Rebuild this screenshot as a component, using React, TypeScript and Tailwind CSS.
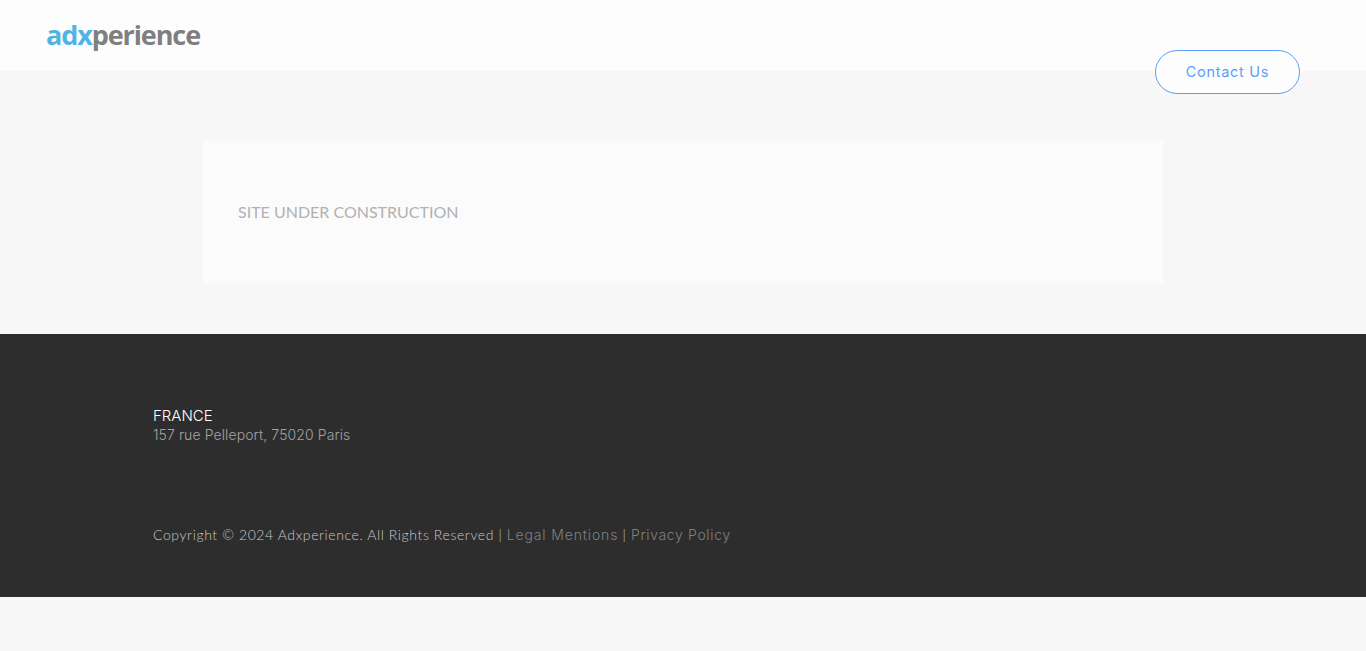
export default function App() {
  return (
    <div className="min-h-[651px] bg-[#f7f7f7] font-['Lato',sans-serif]">
      <header className="h-[71px] bg-[#fdfdfd] flex justify-between pl-[46px] pr-[66px]">
        <div className="pt-[17px] h-[35px] text-[27px] leading-[36px] font-bold tracking-[-1.1px] font-['Open_Sans',sans-serif] flex">
          <span className="text-[#4fb3e3]">adx</span>
          <span className="text-[#7f7f7f]">perience</span>
        </div>
        <a className="mt-[50px] w-[145px] h-[44px] shrink-0 rounded-[22px] border border-[#5b9ff5] bg-[#fdfdfd] text-[#5b9ff5] text-[14.5px] tracking-[0.7px] font-['Inter',sans-serif] flex items-center justify-center">
          Contact Us
        </a>
      </header>
      <main className="h-[263px] pt-[69px]">
        <div className="w-[960px] h-[144px] mx-auto bg-[#fbfbfb] pl-[35px] flex items-center text-[#b0b1b3] text-[16px]">
          SITE UNDER CONSTRUCTION
        </div>
      </main>
      <footer className="h-[263px] bg-[#2d2d2d] pl-[153px] pt-[72px]">
        <div className="text-white text-[15px] leading-[20px] font-['Inter',sans-serif] font-light">FRANCE</div>
        <div className="text-[#a3a3a3] -mt-px text-[14px] leading-[19px] tracking-[0.1px] font-['Inter',sans-serif] font-light">157 rue Pelleport, 75020 Paris</div>
        <div className="mt-[81px] text-[#c8c8c8] text-[14px] leading-[20px] tracking-[0.6px] font-light">
          Copyright © 2024 Adxperience. All Rights Reserved | <span className="text-[#808080] font-['Inter',sans-serif] text-[14px] tracking-[0.85px] font-light">Legal Mentions</span> | <span className="text-[#808080] font-['Inter',sans-serif] text-[14px] tracking-[0.65px] font-light">Privacy Policy</span>
        </div>
      </footer>
    </div>
  );
}
